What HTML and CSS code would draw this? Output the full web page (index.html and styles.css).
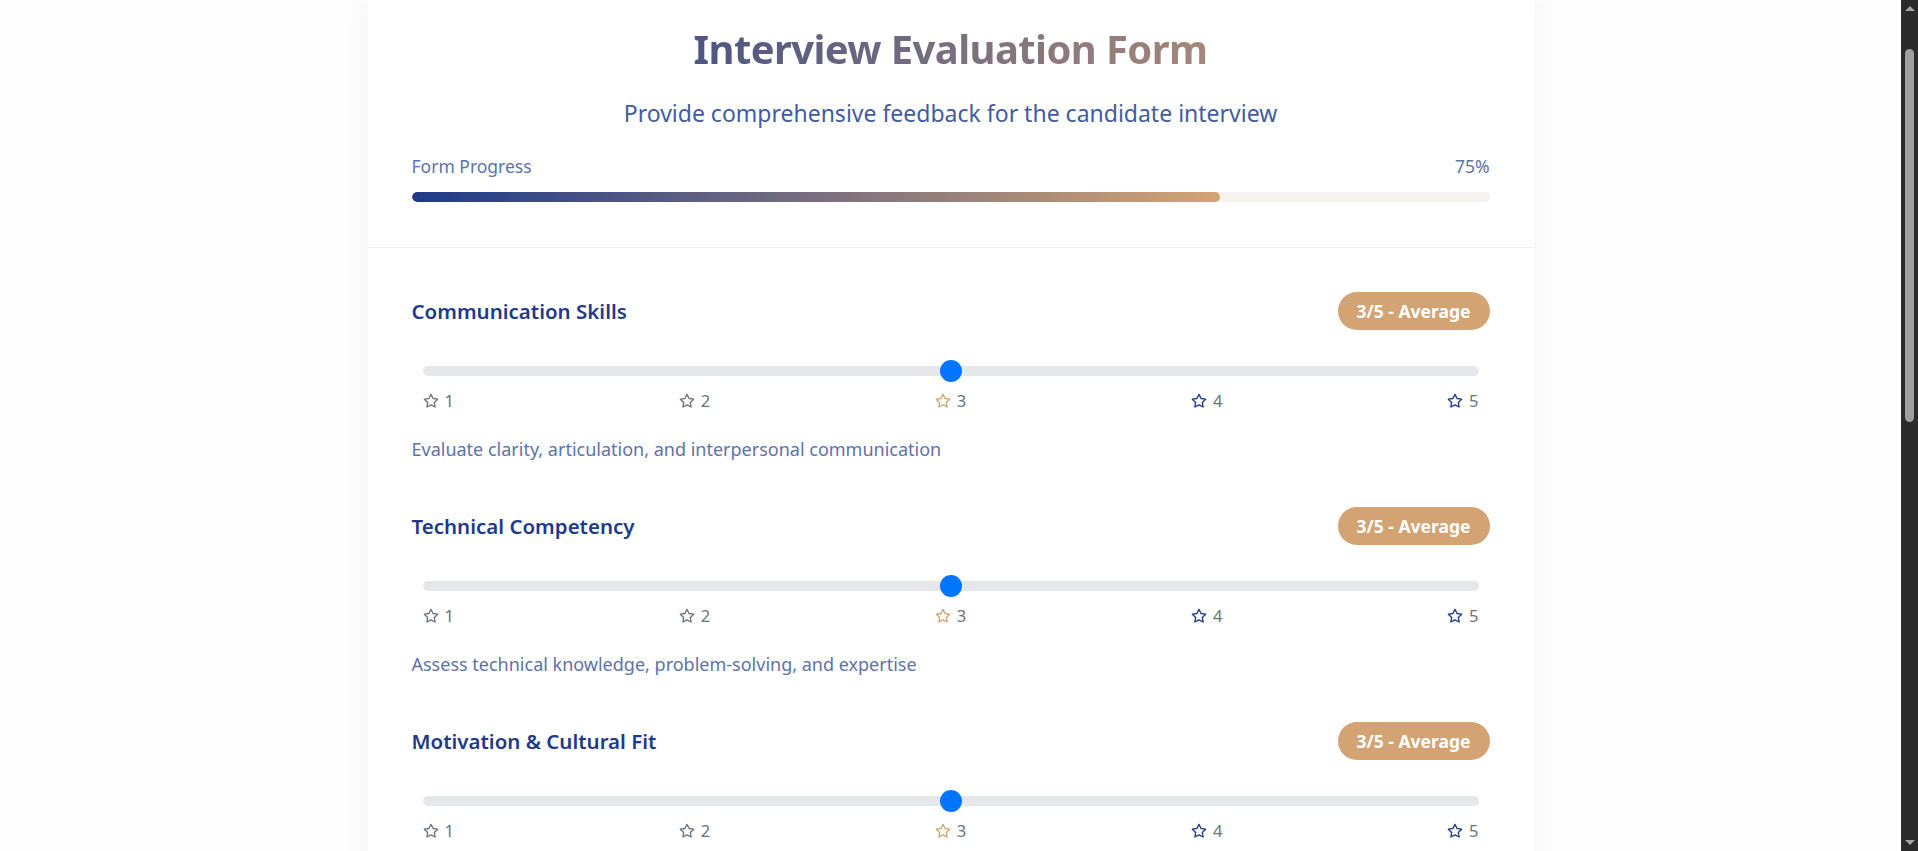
FILE: index.html
```html
<!DOCTYPE html>
<html lang="en">
<head>
<meta charset="utf-8">
<title>Interview Evaluation Form</title>
<link rel="stylesheet" href="styles.css">
</head>
<body>
<div class="viewport">
  <div class="card">
    <header class="card-header">
      <h1 class="title">Interview Evaluation Form</h1>
      <p class="subtitle">Provide comprehensive feedback for the candidate interview</p>
      <div class="progress-info"><span>Form Progress</span><span>75%</span></div>
      <div class="progress-track"><div class="progress-fill" style="width:75%"></div></div>
    </header>
    <div class="card-body">
      <section class="criterion">
        <div class="criterion-head"><h2 class="criterion-title">Communication Skills</h2><span class="badge">3/5 - Average</span></div>
        <div class="slider-wrap"><input class="slider" type="range" min="1" max="5" value="3"></div>
        <div class="scale">
          <span class="tick tick-low"><svg viewBox="0 0 24 24"><polygon points="12 2 15.09 8.26 22 9.27 17 14.14 18.18 21.02 12 17.77 5.82 21.02 7 14.14 2 9.27 8.91 8.26 12 2"/></svg>1</span>
          <span class="tick tick-low"><svg viewBox="0 0 24 24"><polygon points="12 2 15.09 8.26 22 9.27 17 14.14 18.18 21.02 12 17.77 5.82 21.02 7 14.14 2 9.27 8.91 8.26 12 2"/></svg>2</span>
          <span class="tick tick-mid"><svg viewBox="0 0 24 24"><polygon points="12 2 15.09 8.26 22 9.27 17 14.14 18.18 21.02 12 17.77 5.82 21.02 7 14.14 2 9.27 8.91 8.26 12 2"/></svg>3</span>
          <span class="tick tick-high"><svg viewBox="0 0 24 24"><polygon points="12 2 15.09 8.26 22 9.27 17 14.14 18.18 21.02 12 17.77 5.82 21.02 7 14.14 2 9.27 8.91 8.26 12 2"/></svg>4</span>
          <span class="tick tick-high"><svg viewBox="0 0 24 24"><polygon points="12 2 15.09 8.26 22 9.27 17 14.14 18.18 21.02 12 17.77 5.82 21.02 7 14.14 2 9.27 8.91 8.26 12 2"/></svg>5</span>
        </div>
        <p class="desc">Evaluate clarity, articulation, and interpersonal communication</p>
      </section>
      <section class="criterion">
        <div class="criterion-head"><h2 class="criterion-title">Technical Competency</h2><span class="badge">3/5 - Average</span></div>
        <div class="slider-wrap"><input class="slider" type="range" min="1" max="5" value="3"></div>
        <div class="scale">
          <span class="tick tick-low"><svg viewBox="0 0 24 24"><polygon points="12 2 15.09 8.26 22 9.27 17 14.14 18.18 21.02 12 17.77 5.82 21.02 7 14.14 2 9.27 8.91 8.26 12 2"/></svg>1</span>
          <span class="tick tick-low"><svg viewBox="0 0 24 24"><polygon points="12 2 15.09 8.26 22 9.27 17 14.14 18.18 21.02 12 17.77 5.82 21.02 7 14.14 2 9.27 8.91 8.26 12 2"/></svg>2</span>
          <span class="tick tick-mid"><svg viewBox="0 0 24 24"><polygon points="12 2 15.09 8.26 22 9.27 17 14.14 18.18 21.02 12 17.77 5.82 21.02 7 14.14 2 9.27 8.91 8.26 12 2"/></svg>3</span>
          <span class="tick tick-high"><svg viewBox="0 0 24 24"><polygon points="12 2 15.09 8.26 22 9.27 17 14.14 18.18 21.02 12 17.77 5.82 21.02 7 14.14 2 9.27 8.91 8.26 12 2"/></svg>4</span>
          <span class="tick tick-high"><svg viewBox="0 0 24 24"><polygon points="12 2 15.09 8.26 22 9.27 17 14.14 18.18 21.02 12 17.77 5.82 21.02 7 14.14 2 9.27 8.91 8.26 12 2"/></svg>5</span>
        </div>
        <p class="desc">Assess technical knowledge, problem-solving, and expertise</p>
      </section>
      <section class="criterion">
        <div class="criterion-head"><h2 class="criterion-title">Motivation &amp; Cultural Fit</h2><span class="badge">3/5 - Average</span></div>
        <div class="slider-wrap"><input class="slider" type="range" min="1" max="5" value="3"></div>
        <div class="scale">
          <span class="tick tick-low"><svg viewBox="0 0 24 24"><polygon points="12 2 15.09 8.26 22 9.27 17 14.14 18.18 21.02 12 17.77 5.82 21.02 7 14.14 2 9.27 8.91 8.26 12 2"/></svg>1</span>
          <span class="tick tick-low"><svg viewBox="0 0 24 24"><polygon points="12 2 15.09 8.26 22 9.27 17 14.14 18.18 21.02 12 17.77 5.82 21.02 7 14.14 2 9.27 8.91 8.26 12 2"/></svg>2</span>
          <span class="tick tick-mid"><svg viewBox="0 0 24 24"><polygon points="12 2 15.09 8.26 22 9.27 17 14.14 18.18 21.02 12 17.77 5.82 21.02 7 14.14 2 9.27 8.91 8.26 12 2"/></svg>3</span>
          <span class="tick tick-high"><svg viewBox="0 0 24 24"><polygon points="12 2 15.09 8.26 22 9.27 17 14.14 18.18 21.02 12 17.77 5.82 21.02 7 14.14 2 9.27 8.91 8.26 12 2"/></svg>4</span>
          <span class="tick tick-high"><svg viewBox="0 0 24 24"><polygon points="12 2 15.09 8.26 22 9.27 17 14.14 18.18 21.02 12 17.77 5.82 21.02 7 14.14 2 9.27 8.91 8.26 12 2"/></svg>5</span>
        </div>
      </section>
    </div>
  </div>
</div>
<div class="scrollbar">
  <span class="sb-arrow sb-up"></span>
  <div class="sb-track"><span class="sb-thumb"></span></div>
  <span class="sb-arrow sb-down"></span>
</div>
</body>
</html>
```

FILE: styles.css
```css
* { box-sizing: border-box; }

html, body {
  margin: 0;
  height: 100%;
}

body {
  display: flex;
  overflow: hidden;
  background: #fdfdfd;
  font-family: "Segoe UI", "Noto Sans", "Open Sans", sans-serif;
  color: #1e3a8a;
}

.viewport {
  flex: 1;
  min-width: 0;
  height: 100vh;
  overflow: hidden;
  display: flex;
  justify-content: center;
}

.card {
  width: 1166px;
  background: #ffffff;
  box-shadow: 0 0 24px rgba(0, 0, 0, 0.05);
  align-self: flex-start;
}

.card-header {
  padding: 25px 44px 45px;
  border-bottom: 1px solid #f1f1f1;
}

.title {
  margin: 0;
  font-size: 40px;
  line-height: 48px;
  font-weight: 700;
  letter-spacing: -0.6px;
  text-align: center;
  background: linear-gradient(90deg, #1e3a8a, #d4a373);
  -webkit-background-clip: text;
  background-clip: text;
  color: transparent;
}

.subtitle {
  margin: 25px 0 0;
  font-size: 23px;
  line-height: 30px;
  text-align: center;
  color: #3f5ca2;
}

.progress-info {
  margin-top: 26px;
  display: flex;
  justify-content: space-between;
  font-size: 17.5px;
  line-height: 24px;
  color: #5d72ac;
}

.progress-track {
  margin-top: 14px;
  height: 10px;
  border-radius: 5px;
  background: #f6f2ed;
  overflow: hidden;
}

.progress-fill {
  height: 100%;
  border-radius: 5px;
  background: linear-gradient(90deg, #1e3a8a, #d4a373);
}

.card-body {
  padding: 44px 44px 40px;
}

.criterion {
  margin-bottom: 46px;
}

.criterion-head {
  display: flex;
  align-items: center;
  justify-content: space-between;
  height: 38px;
}

.criterion-title {
  margin: 0;
  font-size: 20.5px;
  font-weight: 600;
  color: #1e3a8a;
}

.badge {
  display: inline-flex;
  align-items: center;
  height: 38px;
  padding: 0 19px;
  border-radius: 19px;
  background: #d4a373;
  color: #ffffff;
  font-size: 17.5px;
  font-weight: 700;
}

.slider-wrap {
  margin-top: 30px;
  padding: 0 11px;
}

.slider {
  -webkit-appearance: none;
  appearance: none;
  display: block;
  width: 100%;
  height: 22px;
  margin: 0;
  background: transparent;
}

.slider::-webkit-slider-runnable-track {
  height: 10px;
  border-radius: 5px;
  background: #e5e7eb;
}

.slider::-webkit-slider-thumb {
  -webkit-appearance: none;
  appearance: none;
  width: 22px;
  height: 22px;
  margin-top: -6px;
  border-radius: 50%;
  background: #0075ff;
  border: none;
}

.scale {
  margin-top: 9px;
  padding: 0 11px;
  display: flex;
  justify-content: space-between;
  font-size: 16.5px;
  line-height: 20px;
  color: #6b7280;
}

.tick {
  display: inline-flex;
  align-items: center;
  gap: 6px;
}

.tick svg {
  width: 16px;
  height: 16px;
  fill: none;
  stroke-width: 2;
  stroke-linejoin: round;
}

.tick-low svg { stroke: #6b7280; }
.tick-mid svg { stroke: #d4a373; }
.tick-high svg { stroke: #1e3a8a; }

.desc {
  margin: 26px 0 0;
  font-size: 18px;
  line-height: 24px;
  color: #5d72ac;
}

.scrollbar {
  width: 17px;
  height: 100vh;
  flex: none;
  background: #2b2b2b;
  display: flex;
  flex-direction: column;
  align-items: center;
}

.sb-arrow {
  width: 0;
  height: 0;
  border-left: 5px solid transparent;
  border-right: 5px solid transparent;
  margin: 6px 0;
}

.sb-up { border-bottom: 5px solid #a3a3a3; }
.sb-down { border-top: 5px solid #a3a3a3; }

.sb-track {
  flex: 1;
  width: 100%;
  display: flex;
  justify-content: center;
  padding-top: 32px;
}

.sb-thumb {
  width: 9px;
  height: 373px;
  border-radius: 5px;
  background: #9f9f9f;
}
```
